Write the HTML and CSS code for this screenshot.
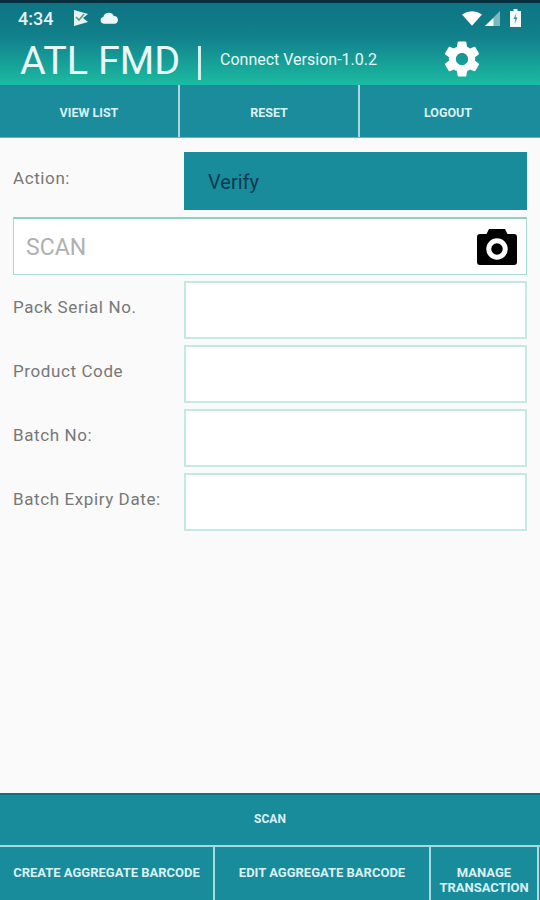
FILE: index.html
```html
<!DOCTYPE html>
<html lang="en">
<head>
    <meta charset="UTF-8">
    <meta name="viewport" content="width=device-width, initial-scale=1.0">
    <title>ATL FMD</title>
    <link rel="stylesheet" href="styles.css">
</head>
<body>
    <div class="app">
        <div class="top-area">
            <div class="status-bar">
                <span class="time">4:34</span>
                <svg class="status-icon flag" viewBox="0 0 16 18" width="16" height="18">
                    <path d="M1 1l14 4-5 4 5 4-14 4z" fill="#e6f5f3"/>
                    <path d="M3 8l3 3 5-6" fill="none" stroke="#5f9a7c" stroke-width="1.6"/>
                </svg>
                <svg class="status-icon" viewBox="0 0 20 12" width="19" height="12">
                    <path d="M4 12a3.6 3.6 0 0 1-.6-7.1A6 6 0 0 1 14.6 4 4.1 4.1 0 0 1 16 12z" fill="#eef8f7"/>
                </svg>
                <span class="status-right">
                    <svg class="wifi" viewBox="0 0 22 16" width="20" height="15">
                        <path d="M0 3.5Q11-3.500 22 3.500L11 16z" fill="#fff"/>
                    </svg>
                    <svg class="signal" viewBox="0 0 16 16" width="17" height="15">
                        <path d="M16 0v16H0z" fill="#7fb9bd"/>
                        <path d="M9 7.500V16H0z" fill="#f2fafa"/>
                    </svg>
                    <svg class="battery" viewBox="0 0 11 18" width="11" height="18">
                        <path d="M3.500 0h4v2H11v16H0V2h3.500z" fill="#f4fbfb"/>
                        <path d="M6.500 4L3.500 10h2l-1 5 3-6.500h-2z" fill="#3d8a80"/>
                    </svg>
                </span>
            </div>
            <div class="app-header">
                <span class="app-name">ATL FMD</span>
                <span class="app-sep"></span>
                <span class="app-version">Connect Version-1.0.2</span>
                <svg class="gear" viewBox="0 0 24 24" width="42" height="42">
                    <path fill="#fff" d="M19.430 12.980c.04-.32.07-.64.07-.98s-.03-.66-.07-.98l2.110-1.650c.19-.15.24-.42.12-.64l-2-3.460c-.12-.22-.39-.3-.61-.22l-2.490 1c-.52-.4-1.080-.73-1.690-.98l-.38-2.650C14.460 2.180 14.250 2 14 2h-4c-.25 0-.46.18-.49.420l-.38 2.650c-.61.25-1.170.59-1.690.98l-2.490-1c-.23-.09-.49 0-.61.22l-2 3.460c-.13.22-.07.49.12.64l2.110 1.650c-.04.32-.07.65-.07.98s.03.66.07.98l-2.110 1.650c-.19.15-.24.42-.12.64l2 3.460c.12.22.39.3.61.22l2.490-1c.52.4 1.080.73 1.690.98l.38 2.650c.03.24.24.42.49.42h4c.25 0 .46-.18.49-.42l.38-2.650c.61-.25 1.170-.59 1.690-.98l2.490 1c.23.09.49 0 .61-.22l2-3.460c.12-.22.07-.49-.12-.64l-2.110-1.650zM12 15.500c-1.930 0-3.500-1.570-3.500-3.500s1.570-3.500 3.500-3.500 3.500 1.570 3.500 3.500-1.570 3.500-3.500 3.500z"/>
                </svg>
            </div>
        </div>

        <div class="nav-row">
            <div class="nav-btn">VIEW LIST</div>
            <div class="nav-btn">RESET</div>
            <div class="nav-btn logout">LOGOUT</div>
        </div>

        <div class="form">
            <div class="form-row">
                <div class="label">Action:</div>
                <div class="action-value">Verify</div>
            </div>
            <div class="scan-box">
                <span class="scan-text">SCAN</span>
                <svg class="camera" viewBox="0 0 40 36" width="40" height="36">
                    <path fill="#000" d="M12 0h16l2.500 5H37a3 3 0 0 1 3 3v25a3 3 0 0 1-3 3H3a3 3 0 0 1-3-3V8a3 3 0 0 1 3-3h6.500z"/>
                    <circle cx="20" cy="20" r="8.250" fill="none" stroke="#fff" stroke-width="5"/>
                </svg>
            </div>
            <div class="form-row">
                <div class="label">Pack Serial No.</div>
                <div class="input-box"></div>
            </div>
            <div class="form-row">
                <div class="label">Product Code</div>
                <div class="input-box"></div>
            </div>
            <div class="form-row">
                <div class="label">Batch No:</div>
                <div class="input-box"></div>
            </div>
            <div class="form-row">
                <div class="label">Batch Expiry Date:</div>
                <div class="input-box"></div>
            </div>
        </div>

        <div class="scan-btn">SCAN</div>
        <div class="bottom-row">
            <div class="bottom-btn create">CREATE AGGREGATE BARCODE</div>
            <div class="bottom-btn edit">EDIT AGGREGATE BARCODE</div>
            <div class="bottom-btn manage">MANAGE TRANSACTION</div>
            <div class="bottom-btn sliver"></div>
        </div>
    </div>
</body>
</html>
```

FILE: styles.css
```css
body {
    font-family: 'Roboto', 'Liberation Sans', sans-serif;
    margin: 0;
    padding: 0;
    background-color: #fafafa;
    color: #777;
}
.app {
    width: 540px;
    height: 900px;
    display: flex;
    flex-direction: column;
    overflow: hidden;
}
.top-area {
    background-image: linear-gradient(to bottom, #0e7484 0, #11808a 33px, #13878f 40px, #1cbfa3 85px);
    border-top: 3px solid #07303f;
}
.status-bar {
    height: 30px;
    display: flex;
    align-items: center;
    padding: 0 19px 0 18px;
    color: #e4f2f2;
}
.time {
    font-size: 18px;
    font-weight: 500;
    width: 55px;
    flex-shrink: 0;
}
.status-icon {
    margin-right: 11px;
}
.status-right {
    margin-left: auto;
    display: flex;
    align-items: center;
}
.status-right .wifi {
    margin-right: 2px;
}
.status-right .signal {
    margin-right: 9px;
}
.app-header {
    height: 52px;
    display: flex;
    align-items: center;
    padding-left: 20px;
    color: #e8f8f6;
}
.app-name {
    font-size: 39.500px;
    width: 159px;
    white-space: nowrap;
    padding-top: 3px;
}
.app-sep {
    width: 3px;
    height: 34px;
    background-color: #d5f2ee;
    margin: 8px 19px 0 19px;
}
.app-version {
    font-size: 16px;
    width: 207px;
    margin-right: 14px;
    padding-top: 1px;
    white-space: nowrap;
}
.gear {
    flex-shrink: 0;
}
.nav-row {
    height: 53px;
    display: flex;
    background-color: #1b8c9b;
    border-bottom: 1px solid #5fb6c0;
    box-sizing: border-box;
}
.nav-btn {
    width: 180px;
    display: flex;
    align-items: center;
    justify-content: center;
    box-sizing: border-box;
    color: #d9f1f3;
    font-size: 12.500px;
    font-weight: 700;
    padding-top: 3px;
    border-right: 2px solid #a9d8de;
}
.nav-btn.logout {
    border-right: none;
    padding-right: 4px;
}
.form {
    flex: 1;
    padding: 14px 13px 0;
    display: flex;
    flex-direction: column;
    gap: 6px;
}
.form-row {
    display: flex;
    height: 58px;
}
.label {
    width: 171px;
    flex-shrink: 0;
    font-size: 17px;
    letter-spacing: 0.6px;
    line-height: 24px;
    padding-top: 14px;
    box-sizing: border-box;
    white-space: nowrap;
}
.action-value {
    flex: 1;
    background-color: #198c9c;
    color: #0d3a52;
    font-size: 20px;
    display: flex;
    align-items: center;
    padding: 2px 0 0 24px;
}
.scan-box {
    height: 58px;
    margin-top: 1px;
    box-sizing: border-box;
    background-color: #fff;
    border: 1px solid #a6dcd4;
    border-top: 2px solid #8cd3c6;
    display: flex;
    align-items: center;
    justify-content: space-between;
    padding: 0 9px 0 12px;
}
.scan-text {
    font-size: 23px;
    color: #b0b0b0;
    padding-top: 2px;
}
.input-box {
    flex: 1;
    background-color: #fff;
    border: 2px solid #c4e9e3;
    box-sizing: border-box;
}
.scan-btn {
    height: 52px;
    background-color: #198c9c;
    border-top: 2px solid #0f6f7e;
    box-sizing: border-box;
    color: #d9f1f3;
    font-size: 12px;
    font-weight: 700;
    padding-bottom: 2px;
    display: flex;
    align-items: center;
    justify-content: center;
}
.bottom-row {
    height: 55px;
    display: flex;
    background-color: #198c9c;
    border-top: 2px solid #a9d8de;
    box-sizing: border-box;
}
.bottom-btn {
    display: flex;
    align-items: center;
    justify-content: center;
    text-align: center;
    box-sizing: border-box;
    color: #d9f1f3;
    font-size: 13px;
    font-weight: 700;
    line-height: 15px;
    padding-bottom: 3px;
    border-right: 2px solid #a9d8de;
}
.bottom-btn.create {
    width: 215px;
}
.bottom-btn.edit {
    width: 216px;
}
.bottom-btn.manage {
    width: 108px;
    padding: 12px 0 0;
}
.bottom-btn.sliver {
    flex: 1;
    border-right: none;
}
```
